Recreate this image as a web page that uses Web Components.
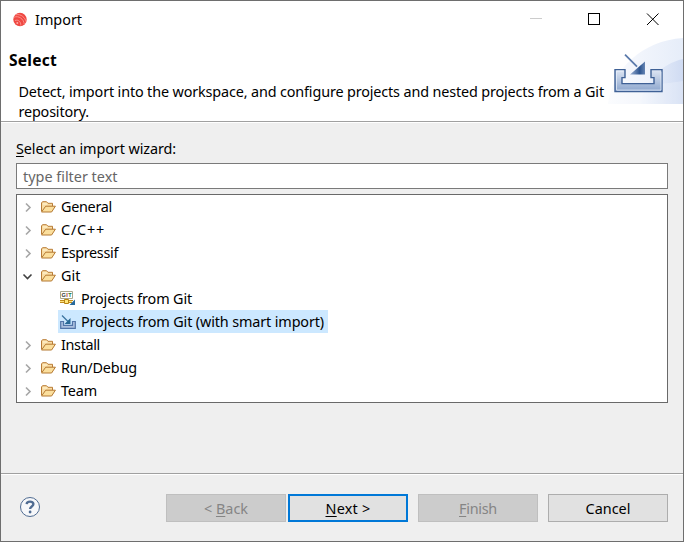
<!DOCTYPE html>
<html lang="en">
<head>
<meta charset="utf-8">
<title>Import</title>
<style>
html,body{margin:0;height:100%;overflow:hidden;background:#efefef}
body{font:14.4px/20px "Noto Sans","Open Sans",sans-serif;color:#000}
</style>
</head>
<body>
<import-dialog></import-dialog>
<script>
const define = (name, html, setup) => customElements.define(name, class extends HTMLElement {
  connectedCallback() {
    if (this.shadowRoot) return;
    this.attachShadow({mode: 'open'}).innerHTML = html;
    if (setup) setup(this, this.shadowRoot);
  }
});

/* One line of text, tracked to the width given in its w attribute. */
define('fit-text', `<style>
:host{display:block;white-space:pre;flex:none}
span{display:inline-block}
::slotted(u){text-decoration:underline;text-decoration-thickness:1px;text-underline-offset:2px}
</style><span><slot></slot></span>`, (el, root) => {
  const span = root.querySelector('span'), target = Number(el.getAttribute('w'));
  const count = el.textContent.length;
  span.style.letterSpacing = (target - span.getBoundingClientRect().width) / count + 'px';
  el.style.width = target + 'px';
});

define('app-logo', `<style>:host{display:block;width:16px;height:16px}svg{display:block}</style>
<svg width="16" height="16" viewBox="0 0 16 16" fill="none"><circle cx="8" cy="7.5" r="6.7" fill="#ef4842"/>
<path d="M2 5.2C6.5 3.5 11.8 6.5 12.3 12.5M3.8 2.8C9 1.5 13.5 6 14 9.7M3 8.5C6.3 7.2 9 9.7 8.8 13.5" stroke="#ff9f99" stroke-width=".8"/><circle cx="5.3" cy="10.9" r="1" fill="#ffaaa4"/></svg>`);

define('title-bar', `<style>
:host{display:flex;height:37px;align-items:center;padding-left:11px}
app-logo{margin-right:7px}
svg{display:block;margin-left:auto}
</style><app-logo></app-logo><fit-text w="45"><slot></slot></fit-text>
<svg width="154" height="37" fill="none" shape-rendering="crispEdges"><path d="M1 17.5h12" stroke="#ccc"/><rect x="59.5" y="12.5" width="11" height="11" stroke="#000"/><path d="M118 12.5l11.5 11.5m0-11.5L118 24" stroke="#000" shape-rendering="auto"/></svg>`);

define('banner-art', `<style>:host{display:block;width:76px;height:66px}svg{display:block}</style>
<svg width="76" height="66" viewBox="0 0 76 66">
<defs><linearGradient id="a" x1="0" x2="1"><stop stop-color="#fafbfe"/><stop offset="1" stop-color="#e6edf9"/></linearGradient>
<linearGradient id="b" x1="0" x2="1"><stop stop-color="#f1f5fc"/><stop offset="1" stop-color="#cad7f1"/></linearGradient>
<linearGradient id="c" x1="0" y1="0" x2="0" y2="1"><stop stop-color="#dfe7f4"/><stop offset="1" stop-color="#8ba5cd"/></linearGradient>
<linearGradient id="d" x1="0" x2="1"><stop stop-color="#9bb0d2"/><stop offset=".65" stop-color="#2c548f"/><stop offset="1" stop-color="#6685b3"/></linearGradient></defs>
<path d="M1 66C6 30 35 3 76 0v66z" fill="url(#a)"/>
<path d="M33 66C38 43 54 26 76 21v45z" fill="url(#b)" opacity=".8"/>
<path d="M3 48C30 49 55 46 76 43v23H1z" fill="#fff" opacity=".22"/>
<g transform="translate(1 -.4)"><path d="M7 32h10v8h-3v6h32v-6h-3v-8h11v22H7z" fill="url(#c)" stroke="#3f6196" stroke-width="1.4"/>
<path d="M8.5 52.5v-19H15.5M53 34v18.5H9" fill="none" stroke="#edf2fb" stroke-width="1" opacity=".7"/>
<path d="M17 17L29 29" stroke="#5b7aab" stroke-width="1.8"/><path d="M37 24v13H22z" fill="url(#d)"/></g>
</svg>`);

define('wizard-header', `<style>
:host{display:flex;justify-content:space-between;height:83px;border-bottom:1px solid #a0a0a0}
.copy{padding:11px 0 0 8px}
.title{font-size:15.6px;font-weight:700;line-height:22px}
.desc{padding:11px 0 0 9.5px}
banner-art{flex:none}
</style><div class="copy"><fit-text class="title" w="48">Select</fit-text>
<div class="desc"><fit-text w="585.5">Detect, import into the workspace, and configure projects and nested projects from a Git</fit-text><fit-text w="70.5">repository.</fit-text></div></div>
<banner-art></banner-art>`);

define('tree-icon', `<style>:host{display:block;width:16px;height:16px;flex:none}svg{display:block}</style>`, (el, root) => {
  const art = {
    folder: '<path d="M1.5 12V4l1-1.3h4L8 4.3h4.5v3" fill="#f9dda4" stroke="#b97c36"/><path d="M1.5 13L5.7 7.2h9.7L11.6 13z" fill="#fbdf9d" stroke="#b47830"/><path d="M3 5h4" stroke="#fff6d9"/>',
    git: '<path d="M.5.5h12v7H.5z" fill="#fff" stroke="#aaa68c"/><text x="1.5" y="6" font-family="Liberation Sans,sans-serif" font-size="5.6" font-weight="700"><tspan x="1.5" fill="#333">G</tspan><tspan x="6.2" fill="#b02828">I</tspan><tspan x="8.3" fill="#267a36">T</tspan></text><path d="M0 9.5h13M0 11.5h12" stroke="#c08a1c"/><path d="M0 10.5h12" stroke="#ffe27a"/><path d="M4.5 8.5h4v4h-4z" fill="#ffe67a" stroke="#b88414"/><path d="M15 8.5v5.5H9.5z" fill="#286a9b"/>',
    import: '<path d="M.7 7.5h2.8v3.8h9V7.5h2.8v6.8H.7z" fill="#adc1df" stroke="#5275a8" stroke-width="1.2"/><path d="M2 1.5l6 6" stroke="#3a729f" stroke-width="1.2"/><path d="M10.5 4v6h-6z" fill="#286895"/>'
  };
  root.innerHTML += `<svg width="16" height="16" viewBox="0 0 16 16" fill="none">${art[el.getAttribute('kind')]}</svg>`;
});

define('tree-row', `<style>
:host{display:flex;height:23px;align-items:center;padding-left:5px}
:host([child]){padding-left:25px}
.arrow{width:13px;height:12px;margin-right:5px;flex:none;fill:none}
.item{display:flex;align-items:center;height:23px;padding-right:4px}
:host([child]) .item{margin-left:-2px;padding-left:2px}
:host([selected]) .item{background:#cce8ff}
tree-icon{margin-right:5px}
</style>`, (el, root) => {
  const open = el.hasAttribute('open'), child = el.hasAttribute('child');
  const arrow = child ? '' : `<path d="${open ? 'M1.5 4.5l4 4 4-4' : 'M4 2.5l4 4-4 4'}" stroke="${open ? '#404040' : '#a6a6a6'}" stroke-width="1.6"/>`;
  root.innerHTML += `<svg class="arrow" viewBox="0 0 13 12">${arrow}</svg><div class="item"><tree-icon kind="${el.getAttribute('icon') || 'folder'}"></tree-icon><fit-text w="${el.getAttribute('w')}">${el.getAttribute('label')}</fit-text></div>`;
});

define('filter-field', `<style>
:host{display:flex;box-sizing:border-box;height:26px;border:1px solid #7a7a7a;background:#fff;color:#666;align-items:center;padding:1px 0 0 6px}
</style><fit-text w="93"><slot></slot></fit-text>`);

define('wizard-tree', `<style>:host{display:block;border:1px solid #696969;background:#fff}</style><slot></slot>`);

define('push-button', `<style>
:host{display:flex;box-sizing:border-box;width:120px;height:28px;border:1px solid #adadad;background:#e1e1e1;align-items:center;justify-content:center;padding-top:1px}
:host([disabled]){border-color:#bfbfbf;background:#ccc;color:#858585}
:host([primary]){border:2px solid #0078d7}
</style><slot></slot>`);

define('help-button', `<style>:host{display:block;width:20px;height:20px;box-sizing:border-box;border:1.3px solid #506c92;border-radius:50%;background:#f7f8fa;margin-right:auto}svg{display:block}</style>
<svg width="18" height="18" viewBox="0 0 18 18" fill="none"><path d="M5.7 6.1C5.8 2.8 12.4 2.7 12.4 6.1c0 2.5-3.3 2.4-3.3 5" stroke="#506c92" stroke-width="2.4"/><circle cx="9.1" cy="14" r="1.4" fill="#506c92"/></svg>`);

define('wizard-footer', `<style>
:host{display:flex;box-sizing:border-box;height:68px;border-top:1px solid #a0a0a0;box-shadow:inset 0 1px #fff;padding:20px 15px 0 19px}
help-button{margin-top:3px}
.next{margin-left:2px}.gap{margin-left:10px}
</style><help-button></help-button>
<push-button disabled><fit-text w="44">&lt; <u>B</u>ack</fit-text></push-button>
<push-button class="next" primary><fit-text w="45"><u>N</u>ext &gt;</fit-text></push-button>
<push-button class="gap" disabled><fit-text w="38"><u>F</u>inish</fit-text></push-button>
<push-button class="gap"><fit-text w="45">Cancel</fit-text></push-button>`);

define('import-dialog', `<style>
:host{display:flex;flex-direction:column;box-sizing:border-box;width:684px;height:542px;border:1px solid #6e6e6e;background:#efefef}
.top{background:#fff}
main{flex:1;box-shadow:inset 0 1px #fff;padding:17px 15px 0}
filter-field{margin:4px 0 5px}
</style>
<div class="top"><title-bar>Import</title-bar><wizard-header></wizard-header></div>
<main><fit-text w="160"><u>S</u>elect an import wizard:</fit-text>
<filter-field>type filter text</filter-field>
<wizard-tree>
<tree-row label="General" w="51"></tree-row>
<tree-row label="C/C++" w="44"></tree-row>
<tree-row label="Espressif" w="57"></tree-row>
<tree-row label="Git" w="19.5" open></tree-row>
<tree-row label="Projects from Git" w="111" child icon="git"></tree-row>
<tree-row label="Projects from Git (with smart import)" w="243" child selected icon="import"></tree-row>
<tree-row label="Install" w="39"></tree-row>
<tree-row label="Run/Debug" w="76"></tree-row>
<tree-row label="Team" w="36"></tree-row>
</wizard-tree></main>
<wizard-footer></wizard-footer>`);
</script>
</body>
</html>
